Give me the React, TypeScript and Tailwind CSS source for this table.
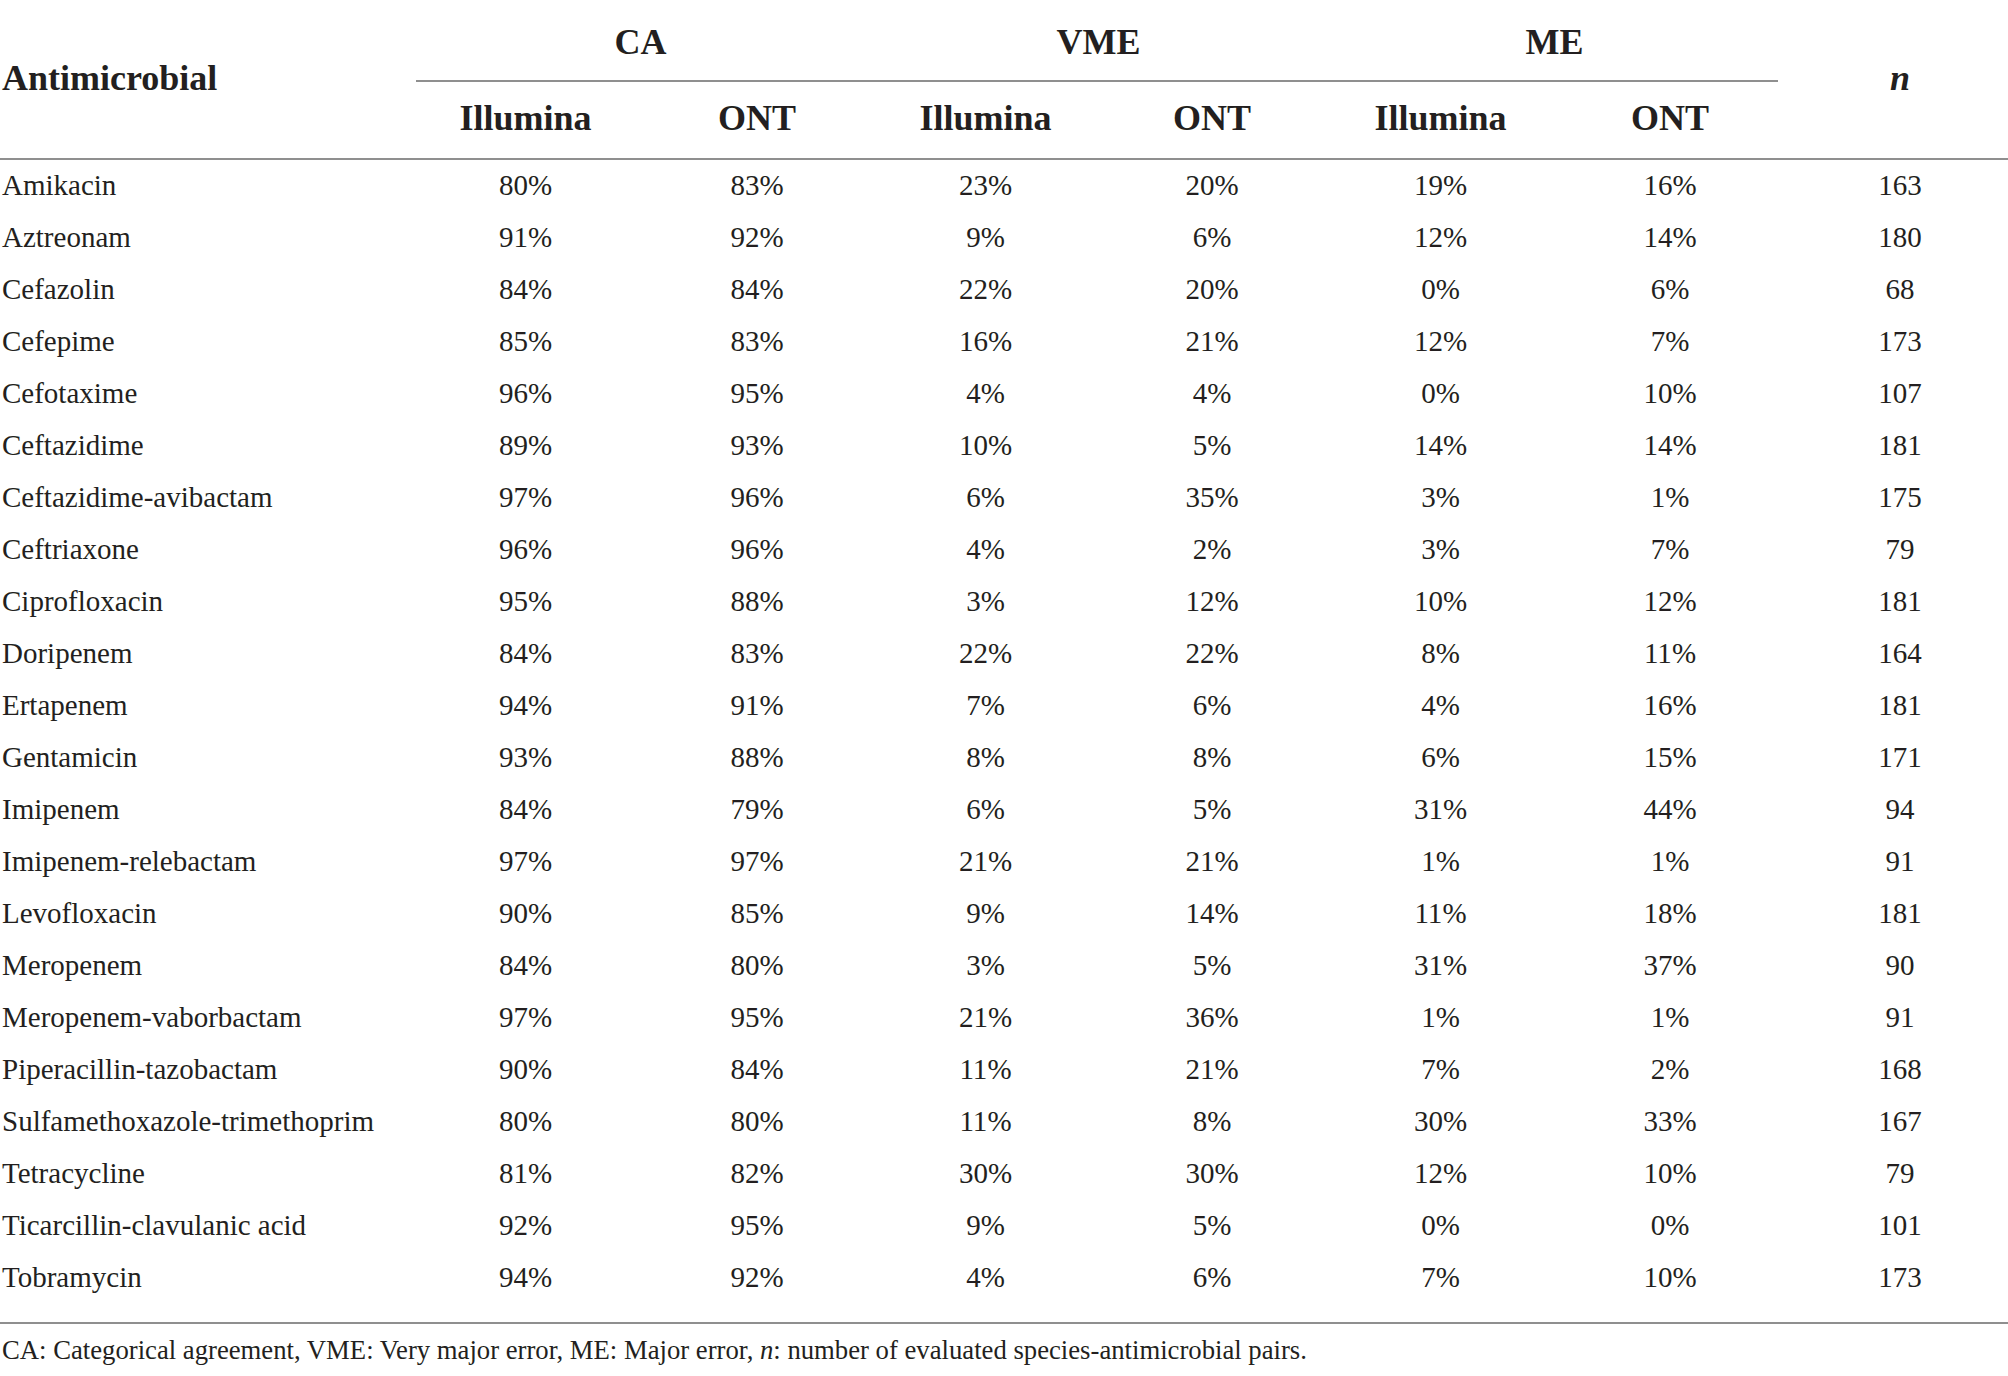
const rows: [string, number, number, number, number, number, number, number][] = [
  ["Amikacin", 80, 83, 23, 20, 19, 16, 163],
  ["Aztreonam", 91, 92, 9, 6, 12, 14, 180],
  ["Cefazolin", 84, 84, 22, 20, 0, 6, 68],
  ["Cefepime", 85, 83, 16, 21, 12, 7, 173],
  ["Cefotaxime", 96, 95, 4, 4, 0, 10, 107],
  ["Ceftazidime", 89, 93, 10, 5, 14, 14, 181],
  ["Ceftazidime-avibactam", 97, 96, 6, 35, 3, 1, 175],
  ["Ceftriaxone", 96, 96, 4, 2, 3, 7, 79],
  ["Ciprofloxacin", 95, 88, 3, 12, 10, 12, 181],
  ["Doripenem", 84, 83, 22, 22, 8, 11, 164],
  ["Ertapenem", 94, 91, 7, 6, 4, 16, 181],
  ["Gentamicin", 93, 88, 8, 8, 6, 15, 171],
  ["Imipenem", 84, 79, 6, 5, 31, 44, 94],
  ["Imipenem-relebactam", 97, 97, 21, 21, 1, 1, 91],
  ["Levofloxacin", 90, 85, 9, 14, 11, 18, 181],
  ["Meropenem", 84, 80, 3, 5, 31, 37, 90],
  ["Meropenem-vaborbactam", 97, 95, 21, 36, 1, 1, 91],
  ["Piperacillin-tazobactam", 90, 84, 11, 21, 7, 2, 168],
  ["Sulfamethoxazole-trimethoprim", 80, 80, 11, 8, 30, 33, 167],
  ["Tetracycline", 81, 82, 30, 30, 12, 10, 79],
  ["Ticarcillin-clavulanic acid", 92, 95, 9, 5, 0, 0, 101],
  ["Tobramycin", 94, 92, 4, 6, 7, 10, 173],
];

const cols = "grid grid-cols-[409px_233px_230px_227px_226px_231px_228px_224px]";

export default function App() {
  return (
    <div className="w-[2008px] h-[1376px] bg-white text-[#231f20] font-['Liberation_Serif',serif] overflow-hidden">
      {/* Header */}
      <div className={`${cols} grid-rows-[82px_76px] border-b-2 border-[#8f8f8f] text-[36px] font-bold`}>
        <div className="row-span-2 flex items-center pl-[2px] pb-[2px]">Antimicrobial</div>
        <div className="col-span-2 ml-[7px] flex items-center justify-center border-b-2 border-[#8f8f8f] pt-[3px] pr-[7px]">
          CA
        </div>
        <div className="col-span-2 flex items-center justify-center border-b-2 border-[#8f8f8f] pt-[3px]">
          VME
        </div>
        <div className="col-span-2 mr-[6px] flex items-center justify-center border-b-2 border-[#8f8f8f] pt-[3px] pl-[6px]">
          ME
        </div>
        <div className="row-span-2 flex items-center justify-center pl-[8px] pb-[2px] italic">n</div>
        {["CA", "VME", "ME"].map((g) => [
          <div key={g + "i"} className="flex items-center justify-center pb-[4px]">
            Illumina
          </div>,
          <div key={g + "o"} className="flex items-center justify-center pb-[4px]">
            ONT
          </div>,
        ])}
      </div>

      {/* Body */}
      <div className="border-b-2 border-[#8f8f8f] pb-[18px] text-[29px]">
        {rows.map((r) => (
          <div key={r[0]} className={`${cols} h-[52px] items-center`}>
            <div className="pl-[2px] pb-[1px]">{r[0]}</div>
            {r.slice(1, 7).map((v, i) => (
              <div key={i} className="text-center pb-[1px]">
                {v}%
              </div>
            ))}
            <div className="text-center pl-[8px] pb-[1px]">{r[7]}</div>
          </div>
        ))}
      </div>

      {/* Footnote */}
      <div className="h-[52px] flex items-center pl-[2px] text-[26.7px]">
        <span>
          CA: Categorical agreement, VME: Very major error, ME: Major error, <i>n</i>: number of evaluated
          species-antimicrobial pairs.
        </span>
      </div>
    </div>
  );
}
